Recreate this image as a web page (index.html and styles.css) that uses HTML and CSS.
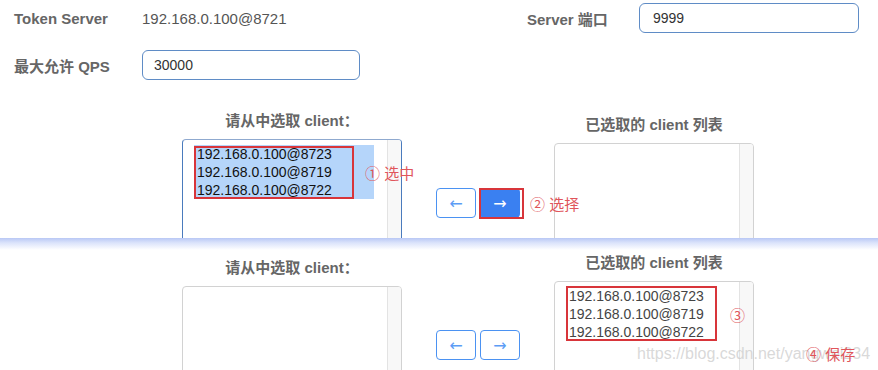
FILE: index.html
```html
<!DOCTYPE html>
<html lang="zh-CN">
<head>
    <meta charset="UTF-8">
    <meta name="viewport" content="width=device-width, initial-scale=1.0">
    <title>Token Server 分配 client</title>
    <link rel="stylesheet" href="styles.css">
</head>
<body>
<div class="shot shot-top">
    <div class="form-row">
        <label class="field-label">Token Server</label>
        <span class="field-value">192.168.0.100@8721</span>
        <label class="field-label narrow" for="port">Server 端口</label>
        <input class="field-input wide" id="port" type="text" value="9999">
    </div>
    <div class="form-row second">
        <label class="field-label" for="qps">最大允许 QPS</label>
        <input class="field-input" id="qps" type="text" value="30000">
    </div>
    <div class="transfer">
        <div class="list-col left">
            <div class="list-title">请从中选取 client：</div>
            <div class="list-box focused">
                <div class="list-options">
                    <div class="option selected">192.168.0.100@8723</div>
                    <div class="option selected">192.168.0.100@8719</div>
                    <div class="option selected">192.168.0.100@8722</div>
                </div>
                <div class="scroll-track"></div>
                <div class="mark-box mark-top"></div>
            </div>
        </div>
        <div class="transfer-btns">
            <button class="arrow-btn">←</button>
            <button class="arrow-btn primary">→<span class="mark-box mark-btn"></span></button>
        </div>
        <div class="list-col right shifted">
            <div class="list-title">已选取的 client 列表</div>
            <div class="list-box">
                <div class="list-options"></div>
                <div class="scroll-track"></div>
            </div>
        </div>
        <span class="note note-1">① 选中</span>
        <span class="note note-2">② 选择</span>
    </div>
</div>
<div class="divider"></div>
<div class="shot shot-bottom">
    <div class="transfer">
        <div class="list-col left shifted">
            <div class="list-title">请从中选取 client：</div>
            <div class="list-box">
                <div class="list-options"></div>
                <div class="scroll-track"></div>
            </div>
        </div>
        <div class="transfer-btns">
            <button class="arrow-btn">←</button>
            <button class="arrow-btn">→</button>
        </div>
        <div class="list-col right">
            <div class="list-title">已选取的 client 列表</div>
            <div class="list-box">
                <div class="list-options">
                    <div class="option">192.168.0.100@8723</div>
                    <div class="option">192.168.0.100@8719</div>
                    <div class="option">192.168.0.100@8722</div>
                </div>
                <div class="scroll-track"></div>
                <div class="mark-box mark-bottom"></div>
            </div>
        </div>
        <span class="watermark">https://blog.csdn.net/yangwei234</span>
        <span class="note note-3">③</span>
        <span class="note note-4">④ 保存</span>
    </div>
</div>
</body>
</html>
```

FILE: styles.css
```css
* {
    box-sizing: border-box;
}
body {
    margin: 0;
    background: #fff;
    font-family: "Liberation Sans", "Noto Sans CJK SC", sans-serif;
    color: #555;
    width: 878px;
    height: 370px;
    overflow: hidden;
}
.shot {
    overflow: hidden;
}
.shot-top {
    height: 238px;
    padding: 3px 0 0 14px;
}
.shot-bottom {
    height: 120px;
}
.divider {
    height: 12px;
    background: linear-gradient(#b9c8f5 0%, #dbe3fb 40%, #fff 100%);
}
.form-row {
    display: flex;
    align-items: center;
    height: 30px;
}
.form-row.second {
    margin-top: 17px;
}
.field-label {
    width: 128px;
    font-size: 15px;
    font-weight: bold;
    color: #666;
}
.field-label.narrow {
    width: 112px;
}
.field-value {
    width: 385px;
    font-size: 15px;
    color: #555;
}
.field-input {
    width: 218px;
    height: 30px;
    border: 1px solid #5f8cc6;
    border-radius: 6px;
    padding: 0 11px;
    font-family: inherit;
    font-size: 14px;
    color: #333;
    outline: none;
}
.field-input.wide {
    width: 220px;
    padding-left: 13px;
}

/* client transfer */
.transfer {
    position: relative;
    display: flex;
    align-items: flex-start;
    margin-left: 182px;
}
.shot-top .transfer {
    margin-top: 31px;
    margin-left: 168px;
}
.shot-bottom .transfer {
    margin-top: 3px;
}
.list-col.left {
    width: 220px;
}
.list-col.right {
    width: 200px;
}
.shot-top .list-col.shifted {
    padding-top: 4px;
}
.shot-bottom .list-col.shifted {
    padding-top: 5px;
}
.list-title {
    height: 20px;
    line-height: 20px;
    margin-bottom: 8px;
    text-align: center;
    font-size: 15px;
    font-weight: bold;
    color: #666;
}
.list-box {
    position: relative;
    display: flex;
    height: 150px;
    border: 1px solid #d2d2d2;
    border-radius: 4px;
    overflow: hidden;
}
.list-box.focused {
    border-color: #4a7bbd;
    border-top-color: #8fa9cf;
}
.list-options {
    flex: 1;
    padding: 5px 13px 5px 11px;
}
.option {
    height: 18px;
    line-height: 18px;
    padding: 0 3px;
    font-size: 14px;
    color: #444;
    white-space: nowrap;
}
.option.selected {
    background: #b5d5fa;
    color: #111;
}
.scroll-track {
    width: 14px;
    background: #f8f8f8;
    border-left: 1px solid #e3e3e3;
}
.transfer-btns {
    display: flex;
    gap: 4px;
    margin: 77px 34px 0 34px;
}
.arrow-btn {
    position: relative;
    width: 40px;
    height: 30px;
    padding: 0;
    border: 1px solid #4b92f2;
    border-radius: 4px;
    background: #fff;
    color: #5c9cf5;
    font-family: "DejaVu Sans", sans-serif;
    font-size: 16px;
    cursor: pointer;
}
.arrow-btn.primary {
    background: #3a80f1;
    border-color: #3a80f1;
    color: #fff;
}

/* screenshot annotations */
.mark-box {
    position: absolute;
    border: 2px solid #d8353a;
    pointer-events: none;
}
.mark-top {
    left: 11px;
    top: 6px;
    width: 160px;
    height: 53px;
}
.mark-bottom {
    left: 11px;
    top: 4px;
    width: 151px;
    height: 55px;
}
.mark-btn {
    left: -2px;
    top: -1px;
    width: 45px;
    height: 31px;
}
.note {
    position: absolute;
    line-height: 20px;
    font-size: 15px;
    color: #e0555b;
    white-space: nowrap;
}
.note-1 {
    left: 183px;
    top: 53px;
}
.note-2 {
    left: 348px;
    top: 84px;
}
.note-3 {
    left: 548px;
    top: 53px;
}
.note-4 {
    left: 624px;
    top: 92px;
}
.watermark {
    position: absolute;
    left: 455px;
    top: 91px;
    line-height: 20px;
    font-size: 16px;
    color: rgba(200, 200, 200, 0.7);
    white-space: nowrap;
}
```
